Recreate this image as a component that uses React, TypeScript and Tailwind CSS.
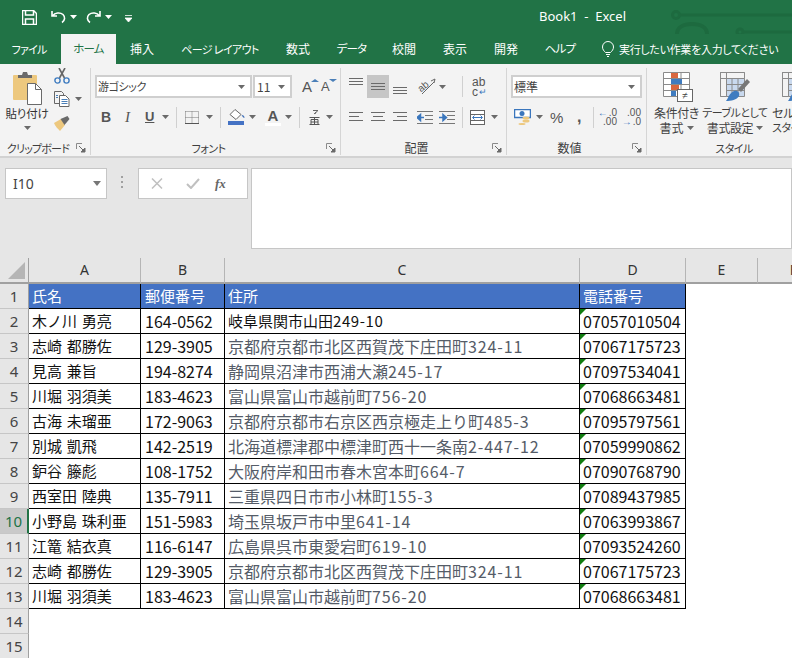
import * as React from "react"

const rows = [
	["氏名", "郵便番号", "住所", "電話番号"],
	["木ノ川 勇亮", "164-0562", "岐阜県関市山田249-10", "07057010504"],
	["志崎 都勝佐", "129-3905", "京都府京都市北区西賀茂下庄田町324-11", "07067175723"],
	["見高 兼旨", "194-8274", "静岡県沼津市西浦大瀬245-17", "07097534041"],
	["川堀 羽須美", "183-4623", "富山県富山市越前町756-20", "07068663481"],
	["古海 未瑠亜", "172-9063", "京都府京都市右京区西京極走上り町485-3", "07095797561"],
	["別城 凱飛", "142-2519", "北海道標津郡中標津町西十一条南2-447-12", "07059990862"],
	["鈩谷 籐彪", "108-1752", "大阪府岸和田市春木宮本町664-7", "07090768790"],
	["西室田 陸典", "135-7911", "三重県四日市市小林町155-3", "07089437985"],
	["小野島 珠利亜", "151-5983", "埼玉県坂戸市中里641-14", "07063993867"],
	["江篭 結衣真", "116-6147", "広島県呉市東愛宕町619-10", "07093524260"],
	["志崎 都勝佐", "129-3905", "京都府京都市北区西賀茂下庄田町324-11", "07067175723"],
	["川堀 羽須美", "183-4623", "富山県富山市越前町756-20", "07068663481"],
]

const tabs: [string, string][] = [
	["挿入", "w-[52px]"],
	["ページ レイアウト", "w-[104px] text-[11px] tracking-[-0.6px]"],
	["数式", "w-[52px]"],
	["データ", "w-[55px] text-[11.5px] tracking-[-0.8px]"],
	["校閲", "w-[50px]"],
	["表示", "w-[52px]"],
	["開発", "w-[50px]"],
	["ヘルプ", "w-[58px] text-[11.5px] tracking-[-0.8px]"],
]

function Caret({ className = "" }: { className?: string }) {
	return (
		<svg width="7" height="4" viewBox="0 0 7 4" className={"shrink-0 " + className}>
			<path d="M0 0h7L3.5 4z" fill="#6a6a6a" />
		</svg>
	)
}

function Launcher() {
	return (
		<svg width="10" height="10" viewBox="0 0 10 10" className="shrink-0">
			<path d="M.5 6V.5H6" fill="none" stroke="#8a8a8a" />
			<path d="M3 3l5 5M9 5v4H5z" fill="#6a6a6a" stroke="#6a6a6a" />
		</svg>
	)
}

function Sep() {
	return <div className="h-[21px] w-px shrink-0 bg-[#d0d0d0]" />
}

function Lines({ widths, offset = [], gap = 3 }: { widths: number[]; offset?: number[]; gap?: number }) {
	return (
		<svg width="15" height={(widths.length - 1) * gap + 2} className="shrink-0">
			{widths.map((w, i) => (
				<rect key={i} x={offset[i] ?? 0} y={i * gap} width={w} height="1" fill="#6a6a6a" />
			))}
		</svg>
	)
}

function Group({
	className,
	label,
	labelClass = "",
	children,
}: {
	className: string
	label: string
	labelClass?: string
	children: React.ReactNode
}) {
	return (
		<div className={"flex h-[87px] shrink-0 flex-col border-r border-[#d5d5d5] " + className}>
			<div className="min-h-0 flex-1">{children}</div>
			<div className="flex h-[14px] items-center pr-[4px] text-[12px] leading-[14px] text-[#3f3f3f]">
				<span className={"flex-1 whitespace-nowrap text-center " + labelClass}>{label}</span>
				<Launcher />
			</div>
		</div>
	)
}

function Paste() {
	return (
		<svg width="29" height="33" viewBox="0 0 29 33">
			<rect x="0" y="3" width="24" height="25" rx="1" fill="#edc87e" />
			<path d="M5 6V3h4l1-3h4l1 3h4v3z" fill="#6a6a6a" />
			<path d="M14.5 11.5h8l6 6v15h-14z" fill="#fff" stroke="#6a6a6a" />
			<path d="M22.5 11.5v6h6" fill="none" stroke="#6a6a6a" />
		</svg>
	)
}

function Scissors() {
	return (
		<svg width="16" height="16" viewBox="0 0 16 16">
			<path d="M5 0l5.5 10M11 0L5.5 10" stroke="#666" strokeWidth="1.6" fill="none" />
			<circle cx="3.5" cy="12.5" r="2.6" fill="none" stroke="#3f7cc0" strokeWidth="1.4" />
			<circle cx="12.5" cy="12.5" r="2.6" fill="none" stroke="#3f7cc0" strokeWidth="1.4" />
		</svg>
	)
}

function Copy() {
	return (
		<svg width="16" height="16" viewBox="0 0 16 16">
			<path d="M.5.5h7l2 2v10h-9z" fill="#f3f3f3" stroke="#666" />
			<path d="M5.5 4.5h6l3.5 3.5v7.5H5.5z" fill="#fff" stroke="#666" />
			<path d="M7.5 8.5h6M7.5 10.5h6M7.5 12.5h6M2 4.5h2M2 6.5h2" stroke="#4a7fb8" />
		</svg>
	)
}

function Brush() {
	return (
		<svg width="16" height="15" viewBox="0 0 16 15">
			<path d="M0 7l7-4 4 6-5 6C4 13 1 10 0 7z" fill="#edc87e" />
			<path d="M6.5 3l7-3 2 3-5 6z" fill="#6a6a6a" />
		</svg>
	)
}

function Borders() {
	return (
		<svg width="14" height="13" viewBox="0 0 14 13">
			<path d="M.5.5h13v12M.5.5v12M7 .5v12M.5 6.5h13" stroke="#777" strokeDasharray="1 1" fill="none" />
			<path d="M0 12.5h14" stroke="#555" />
		</svg>
	)
}

function Fill() {
	return (
		<svg width="17" height="16" viewBox="0 0 17 16">
			<path d="M7 .5l6 5-5 5-6-5z" fill="#fff" stroke="#666" />
			<path d="M13.5 6c2 0 3 1 3 3-1 0-2-1-3-3z" fill="#3f6fb8" />
			<rect x="0" y="12" width="16" height="4" fill="#4472c4" />
		</svg>
	)
}

function Ruby() {
	return (
		<svg width="11" height="16" viewBox="0 0 11 16">
			<path d="M4 1.5h5L5 5M7 3l-1 2" stroke="#666" fill="none" />
			<path d="M.5 8.5h10M2 10.5h7v5H2zM5.5 8.5v7M2 13h7M.5 15.5h10" stroke="#555" fill="none" />
		</svg>
	)
}

function Orient() {
	return (
		<svg width="18" height="17" viewBox="0 0 18 17">
			<path d="M4 16L16 4M13 3l4-2-1 4" stroke="#666" fill="none" />
			<text x="0" y="12" transform="rotate(-40 5 9)" fontSize="10" fill="#555" fontFamily="Liberation Sans">
				ab
			</text>
		</svg>
	)
}

function Indent({ flip }: { flip?: boolean }) {
	return (
		<svg width="16" height="13" viewBox="0 0 16 13">
			<path d="M0 .5h16M8 4.5h8M8 8.5h8M0 12.5h16" stroke="#777" />
			<path
				d={flip ? "M0 6.5h4M4 3.5l3.5 3-3.5 3z" : "M7 6.5H3M3.5 3.5L0 6.5l3.5 3z"}
				stroke="#3a76bd"
				strokeWidth="1.5"
				fill="#3a76bd"
			/>
		</svg>
	)
}

function Merge() {
	return (
		<svg width="15" height="15" viewBox="0 0 15 15">
			<rect x=".5" y=".5" width="14" height="14" fill="#fff" stroke="#666" />
			<path d="M.5 4.5h14M.5 10.5h14" stroke="#666" />
			<path d="M3 7.5h9M4.5 5.5l-2 2 2 2M10.5 5.5l2 2-2 2" stroke="#3a76bd" fill="none" />
		</svg>
	)
}

function Currency() {
	return (
		<svg width="17" height="16" viewBox="0 0 17 16">
			<rect x=".5" y=".5" width="16" height="8" fill="#fff" stroke="#3a76bd" strokeWidth="1.5" />
			<circle cx="8" cy="4.5" r="2.5" fill="#3a76bd" />
			<ellipse cx="12" cy="9" rx="3.5" ry="1.5" fill="#edc87e" />
			<ellipse cx="12" cy="12" rx="3.5" ry="1.5" fill="#edc87e" />
			<ellipse cx="8" cy="15" rx="3.5" ry="1" fill="#edc87e" />
		</svg>
	)
}

function CondFormat() {
	return (
		<svg width="30" height="31" viewBox="0 0 30 31">
			<path d="M.5.5h26v24H.5zM9 .5v24M18 .5v24M.5 6.5h26M.5 12.5h26M.5 18.5h26" fill="#fff" stroke="#8a8a8a" />
			<rect x="8" y="1" width="7" height="5" fill="#d9673f" />
			<rect x="8" y="7" width="11" height="5" fill="#3f7cc0" />
			<rect x="8" y="13" width="8" height="5" fill="#d9673f" />
			<rect x="8" y="19" width="5" height="5" fill="#3f7cc0" />
			<rect x="14.5" y="17.5" width="15" height="12" fill="#fff" stroke="#666" />
			<text x="22" y="27" textAnchor="middle" fontSize="10" fill="#444" fontFamily="Liberation Sans">
				≠
			</text>
		</svg>
	)
}

function TableFormat() {
	return (
		<svg width="31" height="31" viewBox="0 0 31 31">
			<path d="M.5.5h24v24H.5zM6 .5v24M12 .5v24M18 .5v24M.5 6.5h24M.5 12.5h24M.5 18.5h24" fill="#c9d9ee" stroke="#8a8a8a" />
			<path d="M.5.5h24v6H.5zM.5.5h6v24h-6z" fill="#f3f3f3" stroke="#8a8a8a" />
			<path d="M18 17l9-10 3 3-9 10z" fill="#777" />
			<path d="M6 29c2-2 3-8 8-10 4-1 6 2 5 5-2 4-8 5-13 5z" fill="#3f7cc0" />
		</svg>
	)
}

function TitleDecoration() {
	return (
		<svg width="132" height="34" viewBox="0 0 132 34" className="absolute right-0 top-0" fill="none" stroke="#1d6a3f" strokeWidth="3">
			<circle cx="16" cy="15" r="3.5" />
			<path d="M20 15h112" />
			<path d="M17 34c0-7 7-10 15-10s15 3 15 10" strokeWidth="4" />
			<circle cx="80" cy="32" r="3" />
			<path d="M84 32h48" />
		</svg>
	)
}

// address text: the digit runs sit wider than the kanji in the original font
function Address({ text, spacing }: { text: string; spacing: string }) {
	return (
		<>
			{text.split(/([0-9-]+)/).map((part, i) =>
				i % 2 ? (
					<span key={i} className={spacing}>
						{part}
					</span>
				) : (
					part
				),
			)}
		</>
	)
}

function Cell({ text, col, row }: { text: string; col: number; row: number }) {
	const head = row === 0
	const gray = col === 2 && row > 1
	const small = head || col === 0 || (col === 2 && row === 1)
	return (
		<div
			className={
				"relative overflow-hidden whitespace-nowrap border-b border-r border-black leading-[24px] [font-feature-settings:normal] " +
				(col === 1 ? "pl-[4px] " : "pl-[3px] ") +
				(small ? "text-[15px] [word-spacing:1.5px] " : "text-[16px] ") +
				(head ? "bg-[#4472c4] text-white" : gray ? "text-[#555c68]" : "text-[#111]")
			}
		>
			{col === 2 && !head ? <Address text={text} spacing={gray ? "tracking-[0.9px]" : "tracking-[0.6px]"} /> : text}
			{col === 3 && !head ? <span className="absolute left-0 top-0 h-[6px] w-[6px] bg-[#107c10] [clip-path:polygon(0_0,100%_0,0_100%)]" /> : null}
		</div>
	)
}

export default function App() {
	return (
		<div className="h-[658px] w-[792px] overflow-hidden bg-white font-['Noto_Sans_CJK_JP','Noto_Sans',sans-serif] [font-feature-settings:'palt']">
			{/* title bar */}
			<div className="relative flex h-[34px] items-center bg-[#217346] text-white">
				<TitleDecoration />
				<svg width="15" height="15" viewBox="0 0 15 15" className="ml-[22px]">
					<path d="M.5.5h11l3 3v11H.5z" fill="none" stroke="#fff" strokeWidth="1.5" />
					<path d="M3.5 1v4h8V1M3.5 14V9h8v5" fill="none" stroke="#fff" strokeWidth="1.5" />
				</svg>
				<svg width="15" height="14" viewBox="0 0 15 14" className="ml-[14px]" fill="none" stroke="#fff" strokeWidth="1.6">
					<path d="M1 1v5h5M1.5 6C4 2.5 9 2 12 4.5c2.5 2.5 2 6-1 8" />
				</svg>
				<Caret className="ml-[4px] [&_path]:fill-white" />
				<svg width="15" height="14" viewBox="0 0 15 14" className="ml-[9px]" fill="none" stroke="#fff" strokeWidth="1.6">
					<path d="M14 1v5H9M13.5 6C11 2.5 6 2 3 4.5c-2.5 2.5-2 6 1 8" />
				</svg>
				<Caret className="ml-[4px] [&_path]:fill-white" />
				<svg width="7" height="7" viewBox="0 0 7 7" className="ml-[13px] mt-[2px]">
					<path d="M0 .5h7M0 3h7L3.5 7z" fill="#fff" stroke="#fff" strokeWidth=".8" />
				</svg>
				<div className="absolute inset-x-0 top-[8px] whitespace-pre pl-[539px] font-['Noto_Sans',sans-serif] text-[13px] leading-[16px]">Book1  -  Excel</div>
			</div>
			{/* tabs */}
			<div className="flex h-[30px] items-stretch bg-[#217346] text-[12px] text-white">
				<div className="flex w-[58px] shrink-0 items-center justify-center text-[11px] tracking-[-0.8px]">ファイル</div>
				<div className="ml-[3px] flex w-[55px] shrink-0 items-center justify-center bg-[#f3f3f3] text-[11.5px] tracking-[-0.8px] text-[#217346]">ホーム</div>
				{tabs.map(([t, w]) => (
					<div key={t} className={"flex shrink-0 items-center justify-center whitespace-pre " + w}>
						{t}
					</div>
				))}
				<div className="ml-[13px] flex shrink-0 items-center gap-[5px]">
					<svg width="12" height="17" viewBox="0 0 12 17" fill="none" stroke="#fff">
						<path d="M3.5 11.5C2 10 .5 8.5.5 6a5.5 5.5 0 0 1 11 0c0 2.5-1.5 4-3 5.5z" />
						<path d="M4 13.5h4M5 15.5h2" />
					</svg>
					<span className="whitespace-nowrap text-[11px] tracking-[-0.3px]">実行したい作業を入力してください</span>
				</div>
			</div>
			{/* ribbon */}
			<div className="flex h-[94px] items-start overflow-hidden border-b-2 border-[#d2d2d2] bg-[#f3f3f3] pt-[4px] text-[12px] text-[#3f3f3f]">
				<Group className="w-[91px]" label="クリップボード" labelClass="text-[11px] tracking-[-0.8px]">
					<div className="flex">
						<div className="flex w-[54px] flex-col items-center">
							<div className="mt-[4px] h-[33px] pl-[1px]">
								<Paste />
							</div>
							<div className="mt-[1px] whitespace-nowrap text-[11.5px] leading-[14px] tracking-[-0.2px] text-[#333]">貼り付け</div>
							<Caret className="mt-[6px]" />
						</div>
						<div className="flex flex-col">
							<Scissors />
							<div className="mt-[7px] flex items-center gap-[5px]">
								<Copy />
								<Caret />
							</div>
							<div className="mt-[9px]">
								<Brush />
							</div>
						</div>
					</div>
				</Group>

				<Group className="w-[250px]" label="フォント" labelClass="text-[11px] tracking-[-0.5px]">
					<div className="ml-[4px] mt-[7px] flex h-[23px] items-center">
						<div className="flex h-[23px] w-[157px] items-center justify-between border-2 border-[#cfcfcf] bg-white pl-[1px] pr-[5px] text-[#444]">
							<span className="text-[11px] tracking-[-0.4px]">游ゴシック</span>
							<Caret />
						</div>
						<div className="ml-[1px] flex h-[23px] w-[39px] items-center justify-between border-2 border-[#cfcfcf] bg-white pl-[2px] pr-[5px] text-[#444]">
							<span>11</span>
							<Caret />
						</div>
						<div className="relative ml-[10px] w-[17px] font-['Liberation_Sans',sans-serif] text-[15px] leading-[15px] text-[#555]">
							A
							<span className="absolute right-0 top-0 h-0 w-0 border-x-[4px] border-b-[3px] border-x-transparent border-b-[#4a7fb8]" />
						</div>
						<div className="relative ml-[2px] w-[16px] font-['Liberation_Sans',sans-serif] text-[13px] leading-[15px] text-[#555]">
							A
							<span className="absolute right-0 top-0 h-0 w-0 border-x-[4px] border-t-[3px] border-x-transparent border-t-[#4a7fb8]" />
						</div>
					</div>
					<div className="ml-[10px] mt-[7px] flex h-[24px] items-center font-['Liberation_Sans',sans-serif] text-[#555]">
						<span className="w-[22px] text-[14px] font-bold">B</span>
						<span className="w-[22px] pl-[2px] font-['Liberation_Serif',serif] text-[15px] italic">I</span>
						<span className="w-[17px] text-[13px] font-bold underline">U</span>
						<Caret />
						<div className="ml-[7px]">
							<Sep />
						</div>
						<div className="ml-[8px]">
							<Borders />
						</div>
						<Caret className="ml-[7px]" />
						<div className="ml-[7px]">
							<Sep />
						</div>
						<div className="ml-[7px]">
							<Fill />
						</div>
						<Caret className="ml-[4px]" />
						<div className="ml-[9px] flex w-[16px] flex-col items-center">
							<span className="text-[15px] font-bold leading-[14px]">A</span>
							<span className="h-[3px] w-[16px] bg-white" />
						</div>
						<Caret className="ml-[4px]" />
						<div className="ml-[7px]">
							<Sep />
						</div>
						<div className="ml-[9px]">
							<Ruby />
						</div>
						<Caret className="ml-[6px]" />
					</div>
				</Group>

				<Group className="w-[166px]" label="配置">
					<div className="ml-[8px] mt-[7px] flex h-[23px] items-center">
						<div className="flex h-[23px] w-[14px] items-start pt-[3px]">
							<Lines widths={[14, 14, 14]} />
						</div>
						<div className="ml-[4px] flex h-[23px] w-[22px] items-center justify-center bg-[#c6c6c6]">
							<Lines widths={[14, 14, 14]} />
						</div>
						<div className="ml-[4px] flex h-[23px] w-[14px] items-end pb-[3px]">
							<Lines widths={[14, 14, 14]} />
						</div>
						<div className="ml-[11px]">
							<Orient />
						</div>
						<Caret className="ml-[3px]" />
						<div className="ml-[16px]">
							<div className="h-[21px] w-px bg-[#d0d0d0]" />
						</div>
						<div className="ml-[9px] flex w-[14px] flex-col items-start font-['Liberation_Sans',sans-serif] text-[12px] leading-[10px] text-[#555]">
							<span>ab</span>
							<span className="flex items-center">
								c<span className="ml-[1px] text-[9px] text-[#3a76bd]">↵</span>
							</span>
						</div>
					</div>
					<div className="ml-[8px] mt-[7px] flex h-[24px] items-center">
						<Lines widths={[14, 10, 14]} gap={4} />
						<div className="ml-[7px]">
							<Lines widths={[14, 10, 14]} offset={[0, 2, 0]} gap={4} />
						</div>
						<div className="ml-[7px]">
							<Lines widths={[14, 10, 14]} offset={[0, 4, 0]} gap={4} />
						</div>
						<div className="ml-[9px]">
							<Indent />
						</div>
						<div className="ml-[6px]">
							<Indent flip />
						</div>
						<div className="ml-[7px]">
							<Sep />
						</div>
						<div className="ml-[7px]">
							<Merge />
						</div>
						<Caret className="ml-[6px]" />
					</div>
				</Group>

				<Group className="w-[140px]" label="数値">
					<div className="ml-[4px] mt-[7px] flex h-[23px] w-[131px] items-center justify-between border-2 border-[#cfcfcf] bg-white pl-[1px] pr-[5px] text-[#444]">
						<span>標準</span>
						<Caret />
					</div>
					<div className="ml-[7px] mt-[7px] flex h-[24px] items-center font-['Liberation_Sans',sans-serif] text-[#555]">
						<Currency />
						<Caret className="ml-[5px]" />
						<span className="ml-[7px] w-[15px] text-[15px] leading-[15px]">%</span>
						<span className="ml-[12px] w-[6px] text-[16px] font-bold leading-[14px]">,</span>
						<div className="ml-[10px]">
							<Sep />
						</div>
						<div className="ml-[3px] flex w-[20px] flex-col items-end text-[10px] leading-[9px]">
							<span className="flex items-center">
								<span className="mr-[1px] text-[#3a76bd]">←</span>.0
							</span>
							<span>.00</span>
						</div>
						<div className="ml-[6px] flex w-[18px] flex-col items-end text-[10px] leading-[9px]">
							<span>.00</span>
							<span className="flex items-center">
								<span className="mr-[1px] text-[#3a76bd]">→</span>.0
							</span>
						</div>
					</div>
				</Group>

				<div className="flex h-[87px] w-[174px] shrink-0 flex-col">
					<div className="flex min-h-0 flex-1 text-[12px] leading-[15px] text-[#3f3f3f]">
						<div className="ml-[6px] flex w-[47px] shrink-0 flex-col items-center">
							<div className="mt-[4px] h-[31px] pl-[2px]">
								<CondFormat />
							</div>
							<div className="mt-[2px] whitespace-nowrap tracking-[-0.4px]">条件付き</div>
							<div className="flex items-center gap-[3px] whitespace-nowrap">
								書式
								<Caret />
							</div>
						</div>
						<div className="ml-[2px] flex w-[66px] shrink-0 flex-col items-center">
							<div className="mt-[4px] h-[31px]">
								<TableFormat />
							</div>
							<div className="mt-[2px] whitespace-nowrap text-[11px] tracking-[-0.5px]">テーブルとして</div>
							<div className="flex items-center gap-[3px] whitespace-nowrap">
								<span className="tracking-[-0.4px]">書式設定</span>
								<Caret />
							</div>
						</div>
						<div className="ml-[4px] flex flex-col items-start">
							<div className="mt-[4px] h-[31px] pl-[10px]">
								<TableFormat />
							</div>
							<div className="mt-[2px] whitespace-nowrap">セル</div>
							<div className="whitespace-nowrap text-[11px] tracking-[-0.5px]">スタイル</div>
						</div>
					</div>
					<div className="h-[14px] whitespace-nowrap text-center text-[11px] leading-[14px] tracking-[-0.5px] text-[#3f3f3f]">スタイル</div>
				</div>
			</div>
			{/* formula bar */}
			<div className="flex h-[100px] items-start bg-[#e6e6e6] pt-[10px]">
				<div className="ml-[5px] flex h-[31px] w-[102px] items-center justify-between border border-[#c6c6c6] bg-white pl-[7px] pr-[5px] text-[13px] text-[#444]">
					<span className="font-['Noto_Sans',sans-serif] text-[14px]">I10</span>
					<svg width="8" height="5" viewBox="0 0 8 5">
						<path d="M0 0h8L4 5z" fill="#777" />
					</svg>
				</div>
				<div className="ml-[14px] mt-[8px] flex w-[3px] flex-col gap-[3px]">
					<span className="h-[2px] w-[2px] bg-[#a0a0a0]" />
					<span className="h-[2px] w-[2px] bg-[#a0a0a0]" />
					<span className="h-[2px] w-[2px] bg-[#a0a0a0]" />
				</div>
				<div className="ml-[14px] flex h-[31px] w-[110px] items-center border border-[#c6c6c6] bg-white">
					<svg width="12" height="11" viewBox="0 0 12 11" className="ml-[12px]">
						<path d="M1 .5l10 10M11 .5l-10 10" stroke="#c0c0c0" strokeWidth="1.5" />
					</svg>
					<svg width="14" height="11" viewBox="0 0 14 11" className="ml-[23px]">
						<path d="M1 6l4 4 8-9" stroke="#c0c0c0" strokeWidth="2" fill="none" />
					</svg>
					<span className="ml-[15px] font-['Liberation_Serif',serif] text-[13px] font-bold italic leading-[13px] text-[#666]">fx</span>
				</div>
				<div className="ml-[3px] h-[81px] flex-1 border border-[#c6c6c6] bg-white" />
			</div>
			{/* sheet */}
			<div className="grid grid-cols-[29px_112px_84px_355px_106px_72px_72px] grid-rows-[26px_repeat(15,25px)]">
				<div className="relative border-b-2 border-r border-[#a0a0a0] bg-[#e6e6e6]">
					<svg width="18" height="18" viewBox="0 0 18 18" className="absolute left-[8px] top-[4px]">
						<path d="M17 0v17H0z" fill="#b5b5b5" />
					</svg>
				</div>
				{["A", "B", "C", "D", "E", "F"].map((c) => (
					<div key={c} className="flex items-center justify-center border-b-2 border-r border-b-[#a0a0a0] border-r-[#b5b5b5] bg-[#e6e6e6] pb-[1px] font-['Noto_Sans',sans-serif] text-[14px] text-[#333]">
						{c}
					</div>
				))}
				{Array.from({ length: 15 }).map((_, r) => (
					<React.Fragment key={r}>
						<div
							className={
								"flex items-center justify-center border-b font-['Noto_Sans',sans-serif] text-[15px] " +
								(r === 9
									? "border-r-2 border-b-[#c6c6c6] border-r-[#217346] bg-[#c9c9c9] text-[#217346]"
									: "border-r border-b-[#c6c6c6] border-r-[#a0a0a0] bg-[#e6e6e6] text-[#444]")
							}
						>
							{r + 1}
						</div>
						{rows[r] ? (
							rows[r].map((t, c) => <Cell key={c} text={t} col={c} row={r} />)
						) : (
							<>
								<div />
								<div />
								<div />
								<div />
							</>
						)}
						<div />
						<div />
					</React.Fragment>
				))}
			</div>
		</div>
	)
}
